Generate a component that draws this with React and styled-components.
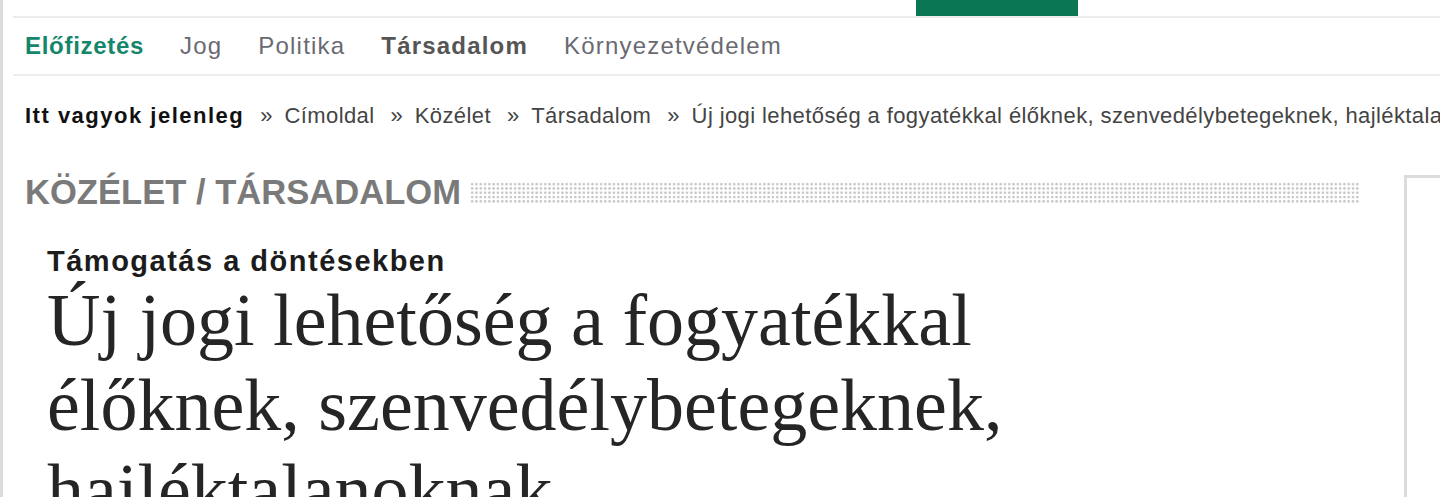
import React from 'react';
import styled, { createGlobalStyle } from 'styled-components';

const GlobalStyle = createGlobalStyle`
  html, body {
    margin: 0;
    padding: 0;
    background: #fff;
    font-family: "Liberation Sans", Arial, sans-serif;
  }
`;

const topLinks = [
  { label: 'Címoldal', width: 160 },
  { label: 'Jogszabályfigyelő', width: 210 },
  { label: 'Bírósági gyakorlat', width: 230 },
  { label: 'Szakmai élet', width: 150 },
  { label: 'Publikációk', width: 153 },
  { label: 'Közélet', width: 162, active: true },
  { label: 'Jogágak', width: 150 },
  { label: 'Kapcsolat', width: 150 },
];

const subLinks = [
  { label: 'Előfizetés', kind: 'promo' },
  { label: 'Jog' },
  { label: 'Politika' },
  { label: 'Társadalom', kind: 'current' },
  { label: 'Környezetvédelem' },
];

const crumbs = ['Címoldal', 'Közélet', 'Társadalom', 'Új jogi lehetőség a fogyatékkal élőknek, szenvedélybetegeknek, hajléktalanoknak'];

const App = () => (
  <>
    <GlobalStyle />
    <Page>
      <TopNav>
        {topLinks.map(link => (
          <TopLink key={link.label} $w={link.width} $active={link.active}>
            {link.label}
          </TopLink>
        ))}
      </TopNav>

      <SubNav>
        {subLinks.map(link => (
          <SubLink key={link.label} $kind={link.kind}>{link.label}</SubLink>
        ))}
      </SubNav>

      <Breadcrumb>
        <Here>Itt vagyok jelenleg</Here>
        {crumbs.map(c => (
          <React.Fragment key={c}>
            <Sep>»</Sep>
            <Crumb>{c}</Crumb>
          </React.Fragment>
        ))}
      </Breadcrumb>

      <Body>
        <Main>
          <SectionHead>
            <SectionTitle>KÖZÉLET / TÁRSADALOM</SectionTitle>
            <Dots />
          </SectionHead>
          <Article>
            <Kicker>Támogatás a döntésekben</Kicker>
            <Title>Új jogi lehetőség a fogyatékkal élőknek, szenvedélybetegeknek, hajléktalanoknak</Title>
          </Article>
        </Main>
        <Sidebar />
      </Body>
    </Page>
  </>
);

const Page = styled.div`
  height: 497px;
  overflow: hidden;
  border-left: 3px solid #dcdcdc;
  padding-left: 10px;
`;

// the page is scrolled: only the bottom edge of the main menu shows
const TopNav = styled.nav`
  display: flex;
  height: 40px;
  margin-top: -24px;
  border-bottom: 2px solid #ececec;
  overflow: hidden;
`;

const TopLink = styled.a`
  flex: none;
  width: ${p => p.$w}px;
  padding-top: 1px;
  font-size: 22px;
  line-height: 1;
  text-align: center;
  white-space: nowrap;
  color: ${p => (p.$active ? '#fff' : '#b5b5b5')};
  background: ${p => (p.$active ? '#0b7654' : 'transparent')};
`;

const SubNav = styled.nav`
  display: flex;
  align-items: center;
  gap: 36px;
  height: 56px;
  padding-left: 12px;
  border-bottom: 2px solid #eeeeee;
`;

const SubLink = styled.a`
  font-size: 24px;
  letter-spacing: ${p => (p.$kind === 'promo' ? '0.7px' : '1.2px')};
  line-height: 1;
  font-weight: ${p => (p.$kind ? 'bold' : 'normal')};
  color: ${p => (p.$kind === 'promo' ? '#14876a' : p.$kind === 'current' ? '#555' : '#6a6a72')};
`;

const Breadcrumb = styled.div`
  display: flex;
  align-items: center;
  padding: 28px 12px;
  height: 24px;
  font-size: 22px;
  white-space: nowrap;
  overflow: hidden;
`;

const Here = styled.strong`
  color: #111;
  letter-spacing: 1.5px;
`;

const Sep = styled.span`
  color: #444;
  margin: 0 12px 0 16px;
`;

const Crumb = styled.a`
  color: #444;
  letter-spacing: 0.4px;
`;

const Body = styled.div`
  display: flex;
  align-items: flex-start;
  margin-top: 19px;
`;

const Main = styled.main`
  flex: none;
  width: 1335px;
  margin-left: 12px;
`;

const SectionHead = styled.div`
  display: flex;
  align-items: flex-start;
`;

const SectionTitle = styled.h2`
  margin: 0;
  font-size: 34.6px;
  line-height: 34px;
  font-weight: bold;
  color: #7a7a7a;
  white-space: nowrap;
`;

const Dots = styled.div`
  flex: 1;
  height: 21px;
  margin: 7px 0 0 9px;
  background-image: radial-gradient(circle, #c6c6c6 1.1px, transparent 1.4px);
  background-size: 4.3px 4.3px;
`;

const Article = styled.article`
  padding: 38px 0 0 22px;
`;

const Kicker = styled.h3`
  margin: 0;
  font-size: 29px;
  line-height: 29px;
  letter-spacing: 1.5px;
  font-weight: bold;
  color: #1c1c1c;
`;

const Title = styled.h1`
  margin: 2px 0 0;
  max-width: 1060px;
  font-family: "Liberation Serif", "Times New Roman", serif;
  font-size: 74px;
  line-height: 85px;
  font-weight: normal;
  color: #252525;
`;

const Sidebar = styled.aside`
  flex: 1;
  margin-left: 44px;
  height: 400px;
  border-top: 3px solid #dcdcdc;
  border-left: 3px solid #dcdcdc;
`;

export default App;
